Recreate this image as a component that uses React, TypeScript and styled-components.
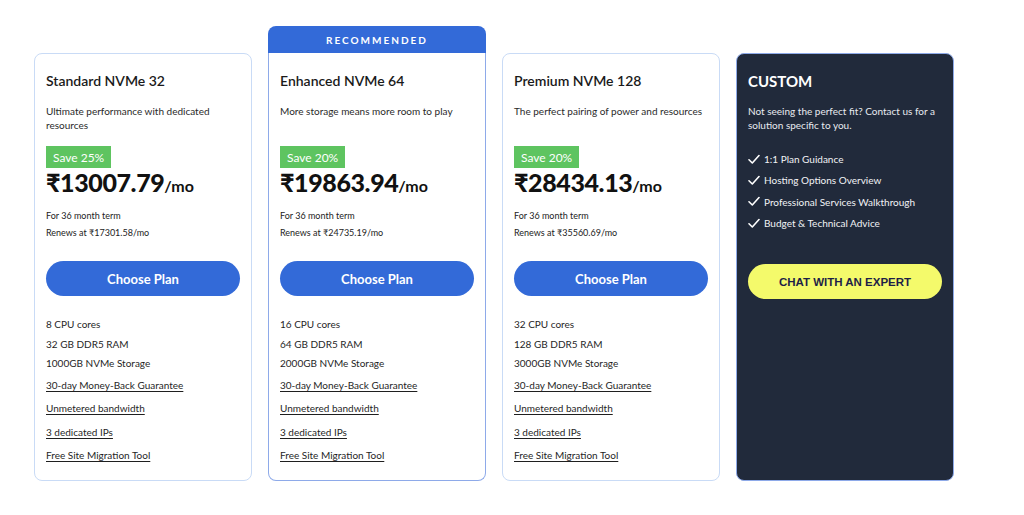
import React from "react";
import styled, { createGlobalStyle } from "styled-components";

const Global = createGlobalStyle`
  html, body { margin: 0; padding: 0; background: #ffffff; }
  body { font-family: "Lato", "Noto Sans", sans-serif; color: #1a1a1a; }
  * { box-sizing: border-box; }
`;

const Page = styled.div`
  width: 1024px;
  height: 481px;
  padding: 26px 0 0 34px;
  display: flex;
  align-items: flex-end;
  gap: 16px;
`;

const Column = styled.div`
  width: 218px;
  display: flex;
  flex-direction: column;
`;

const Banner = styled.div`
  height: 27px;
  background: #336ad8;
  border-radius: 8px 8px 0 0;
  color: #ffffff;
  font-size: 10px;
  font-weight: 700;
  letter-spacing: 2px;
  display: flex;
  align-items: center;
  justify-content: center;
`;

const Card = styled.div<{ $tone: "plain" | "featured" | "dark" }>`
  height: 428px;
  padding: ${(p) => (p.$tone === "featured" ? "18px 11px 0" : "17px 11px 0")};
  display: flex;
  flex-direction: column;
  border: 1px solid
    ${(p) => (p.$tone === "plain" ? "#c9dbf6" : "#8eaae9")};
  border-top: ${(p) => (p.$tone === "featured" ? "none" : "")};
  border-radius: ${(p) => (p.$tone === "featured" ? "0 0 8px 8px" : "8px")};
  background: ${(p) => (p.$tone === "dark" ? "#212a3b" : "#ffffff")};
  color: ${(p) => (p.$tone === "dark" ? "#ffffff" : "#1a1a1a")};

  & > * {
    flex-shrink: 0;
  }
`;

const Title = styled.div<{ $upper?: boolean }>`
  font-size: ${(p) => (p.$upper ? "15px" : "14px")};
  line-height: 20px;
  font-weight: ${(p) => (p.$upper ? 700 : 600)};
`;

const Desc = styled.div<{ $dark?: boolean }>`
  margin-top: 12.5px;
  font-size: 10px;
  line-height: 14.5px;
  height: 29px;
  color: ${(p) => (p.$dark ? "#e8ebf0" : "#2a2a2a")};
`;

const Badge = styled.div`
  margin-top: 13.5px;
  align-self: flex-start;
  height: 22px;
  padding: 0 7px;
  background: #5ec460;
  color: #ffffff;
  font-size: 12px;
  display: flex;
  align-items: center;
`;

const Price = styled.div`
  height: 28px;
  display: flex;
  align-items: baseline;
  font-size: 25px;
  font-weight: 900;
  line-height: 28px;
  letter-spacing: -0.4px;
  color: #111111;
`;

const Per = styled.span`
  font-size: 16px;
  font-weight: 700;
  letter-spacing: 0;
`;

const Terms = styled.div`
  margin-top: 10.5px;
  font-size: 9px;
  line-height: 17px;
  color: #222222;
`;

const PrimaryButton = styled.button`
  margin-top: 20.5px;
  height: 35px;
  width: 100%;
  border: none;
  border-radius: 18px;
  background: #336ad8;
  color: #ffffff;
  font-family: inherit;
  font-size: 13px;
  font-weight: 700;
  cursor: pointer;
`;

const Features = styled.ul`
  list-style: none;
  margin: 19px 0 0 0;
  padding: 0;
  font-size: 10px;
  color: #1f1f1f;
`;

const Feature = styled.li<{ $link?: boolean }>`
  line-height: ${(p) => (p.$link ? "23.5px" : "19.5px")};
  height: ${(p) => (p.$link ? "23.5px" : "19.5px")};
  text-decoration: ${(p) => (p.$link ? "underline" : "none")};
  text-underline-offset: 2px;
  text-decoration-thickness: 1px;
`;

const Checklist = styled.ul`
  list-style: none;
  margin: 16px 0 0 0;
  padding: 0;
  font-size: 10px;
  color: #f1f3f6;
`;

const Check = styled.li`
  height: 21.3px;
  display: flex;
  align-items: center;
  gap: 4px;
`;

const ExpertButton = styled.button`
  margin-top: 30.5px;
  height: 35px;
  width: 100%;
  border: none;
  border-radius: 18px;
  background: #f4fa6b;
  color: #1e1f47;
  font-family: "Liberation Sans", Arial, sans-serif;
  font-size: 11.5px;
  font-weight: 700;
  cursor: pointer;
`;

const CheckIcon = () => (
  <svg width="12" height="11" viewBox="0 0 12 11" fill="none">
    <path d="M1 5.8 L4.3 9 L11 1.5" stroke="#ffffff" strokeWidth="1.6" strokeLinecap="round" strokeLinejoin="round" />
  </svg>
);

type Plan = {
  name: string;
  desc: string;
  save: string;
  price: string;
  renew: string;
  cpu: string;
  ram: string;
  storage: string;
  featured?: boolean;
};

const plans: Plan[] = [
  {
    name: "Standard NVMe 32",
    desc: "Ultimate performance with dedicated resources",
    save: "Save 25%",
    price: "₹13007.79",
    renew: "₹17301.58",
    cpu: "8 CPU cores",
    ram: "32 GB DDR5 RAM",
    storage: "1000GB NVMe Storage",
  },
  {
    name: "Enhanced NVMe 64",
    desc: "More storage means more room to play",
    save: "Save 20%",
    price: "₹19863.94",
    renew: "₹24735.19",
    cpu: "16 CPU cores",
    ram: "64 GB DDR5 RAM",
    storage: "2000GB NVMe Storage",
    featured: true,
  },
  {
    name: "Premium NVMe 128",
    desc: "The perfect pairing of power and resources",
    save: "Save 20%",
    price: "₹28434.13",
    renew: "₹35560.69",
    cpu: "32 CPU cores",
    ram: "128 GB DDR5 RAM",
    storage: "3000GB NVMe Storage",
  },
];

const PlanCard = ({ plan }: { plan: Plan }) => (
  <Card $tone={plan.featured ? "featured" : "plain"}>
    <Title>{plan.name}</Title>
    <Desc>{plan.desc}</Desc>
    <Badge>{plan.save}</Badge>
    <Price>
      {plan.price}
      <Per>/mo</Per>
    </Price>
    <Terms>
      <div>For 36 month term</div>
      <div>Renews at {plan.renew}/mo</div>
    </Terms>
    <PrimaryButton>Choose Plan</PrimaryButton>
    <Features>
      <Feature>{plan.cpu}</Feature>
      <Feature>{plan.ram}</Feature>
      <Feature>{plan.storage}</Feature>
      <Feature $link>30-day Money-Back Guarantee</Feature>
      <Feature $link>Unmetered bandwidth</Feature>
      <Feature $link>3 dedicated IPs</Feature>
      <Feature $link>Free Site Migration Tool</Feature>
    </Features>
  </Card>
);

export default function App() {
  return (
    <>
      <Global />
      <Page>
        {plans.map((p) => (
          <Column key={p.name}>
            {p.featured && <Banner>RECOMMENDED</Banner>}
            <PlanCard plan={p} />
          </Column>
        ))}
        <Column>
          <Card $tone="dark">
            <Title $upper>CUSTOM</Title>
            <Desc $dark>Not seeing the perfect fit? Contact us for a solution specific to you.</Desc>
            <Checklist>
              {[
                "1:1 Plan Guidance",
                "Hosting Options Overview",
                "Professional Services Walkthrough",
                "Budget & Technical Advice",
              ].map((t) => (
                <Check key={t}>
                  <CheckIcon />
                  {t}
                </Check>
              ))}
            </Checklist>
            <ExpertButton>CHAT WITH AN EXPERT</ExpertButton>
          </Card>
        </Column>
      </Page>
    </>
  );
}
